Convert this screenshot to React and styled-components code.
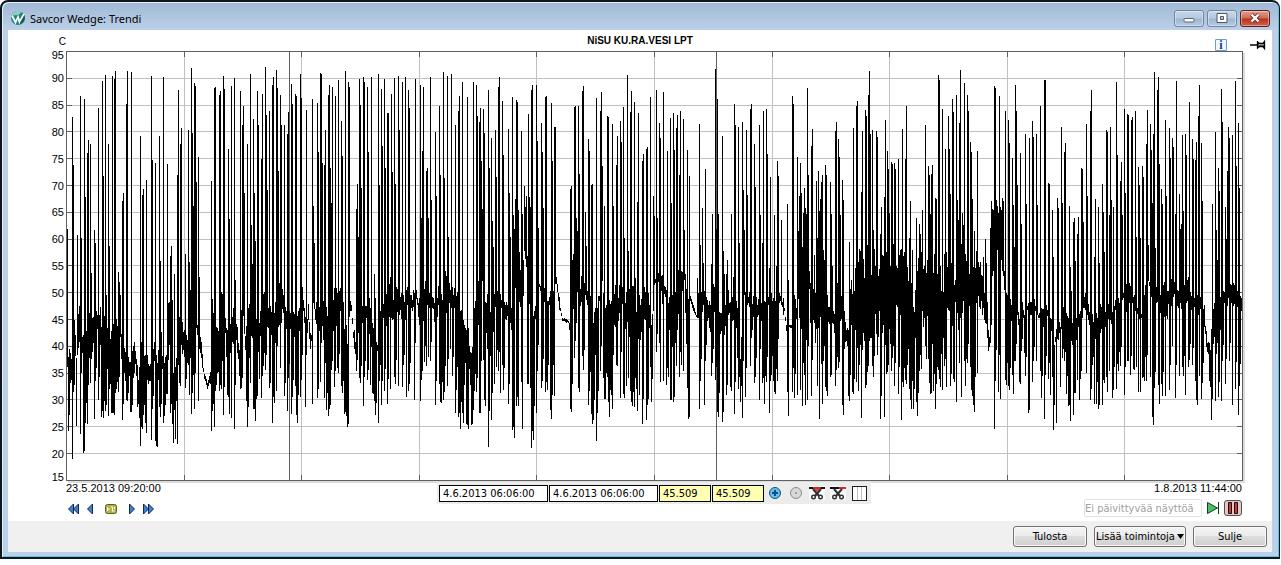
import React from 'react';
import styled, { createGlobalStyle } from 'styled-components';

const PLOT_W = 1177;
const PLOT_H = 430;

// Recorder units, three to a plot column. Each block holds "position,level" pairs:
// peaks and dips are single excursions, band is "position,top,bottom" of the base signal.
const blocks = [
  {
    shift: -6,
    peaks:
      '22,552 37,216 40,360 52,570 61,153 64,580 73,162 82,324 85,285 91,297 94,685 103,555 106,595 115,189 127,108 136,90 139,750 145,297 148,605 157,93 163,102 166,78 175,682 178,711 187,468 190,444 199,177 202,78 214,81 241,273 247,450 250,432 259,405 274,93 277,345 286,354 298,273 301,648 310,98 322,357 325,774 331,633 334,603 343,687 352,390 355,135 361,297 364,249 376,627 385,255 388,652 394,69 397,264 403,114 406,123 415,336 418,697 454,408 463,129 466,126 478,150 481,138 490,93 493,132 505,312 514,123 523,99 526,705 541,138 547,240 550,183 562,297 571,87 574,540 580,222 583,444 592,138 595,240 604,342 607,147 616,66 619,210 628,198 637,120 640,96 649,75 652,129 661,150 664,240 673,240 682,267 685,201 694,117 697,177 706,147 709,153 721,87 724,159 739,195 757,162 760,484 772,174 775,321 781,84 784,87 793,360 796,255 805,150 808,120 814,474 817,126 826,153 835,105 844,228 847,333 856,78 865,111 868,126 889,492 892,417 898,102 901,180 910,96 913,111 922,126 925,321 934,96 943,687 955,87 958,420 964,132 967,303 973,102 982,204 985,204 994,147 1003,99 1006,417 1015,93 1018,255 1027,111 1036,96 1045,135 1048,189 1066,102 1081,120 1084,519 1087,318 1090,126 1099,378 1102,369 1111,96 1114,465 1126,261 1129,453 1138,183 1141,390 1150,81 1153,399 1162,93 1165,576 1174,87 1186,240 1195,198 1198,153',
    dips:
      '25,1160 31,1016 37,1244 40,1043 49,1143 61,1167 64,986 70,1224 73,1220 76,1134 82,1137 85,1022 91,1016 103,1122 106,1010 115,1067 118,996 124,1116 127,1098 130,1119 136,1098 139,1080 145,1113 148,1034 154,1106 157,1104 160,1104 163,1112 169,1000 175,1043 178,996 187,1125 190,1077 199,1067 202,1070 205,1046 211,1101 214,1101 217,1082 220,1000 232,1088 238,1120 241,1203 244,1148 247,1152 250,1110 256,1134 259,1164 265,1019 274,1185 277,1092 286,1190 289,1205 292,1208 298,1088 301,1118 310,1134 313,1115 319,1049 322,1049 331,1106 337,1137 340,1194 343,1097 346,1182 352,1197 358,1016 361,1025 376,1031 388,1052 394,1107 397,1046 403,1092 406,986 415,1070 442,1034 454,1158 457,1100 463,1148 466,1040 475,981 478,1040 481,1022 484,1034 490,1110 502,1052 505,1058 508,1107 514,1120 523,1152 526,1022 541,1034 544,1031 559,1070 562,1148 571,1016 580,1092 583,1092 586,1128 592,1055 598,1002 604,1061 610,965 616,977 628,1031 631,1016 637,1134 640,1058 643,1074 649,1040 661,971 673,1055 676,1016 682,1098 685,1000 694,1107 697,1058 706,1025 709,1110 712,1134 721,1056 724,1006 736,1088 739,930 757,1077 772,1061 775,1034 781,1013 793,1061 796,955 799,1095 805,1113 808,1092 811,1080 814,975 823,1028 832,969 835,985 844,1025 847,1046 853,1107 856,1101 859,1113 862,1148 865,1137 889,980 898,1001 901,1016 910,1085 913,998 922,1007 925,975 931,1022 937,1046 940,1049 943,1070 946,1112 955,1134 958,1010 964,1080 973,1040 982,1077 991,1034 1003,996 1006,1019 1015,1025 1027,1028 1030,960 1039,1058 1045,1040 1048,1019 1063,1067 1066,894 1081,1070 1087,980 1093,953 1099,963 1105,936 1111,948 1126,1082 1138,1019 1141,1073 1144,1076 1150,1067 1153,1043 1162,1025 1171,914 1177,995 1186,1104 1189,1037 1195,1116 1198,1106',
    band:
      '22,930,960 30,935,985 38,960,1000 42,810,930 50,940,970 55,805,890 62,820,910 68,880,930 75,890,950 85,815,930 97,840,900 105,800,920 112,830,860 120,800,880 126,860,1000 140,850,960 150,880,960 160,860,1000 170,800,1000 180,820,880 186,900,970 195,930,1000 205,930,1020 215,950,1000 222,905,950 228,940,975 235,1020,1060 242,920,1110 252,910,1040 262,950,1000 272,960,1010 282,890,950 292,950,1000 302,840,970 312,960,990 320,940,990 328,800,900 336,1020,1060 345,940,1080 352,900,990 360,800,900 367,850,920 375,890,930 385,880,960 393,840,920 402,790,860 410,840,850 416,840,890 424,900,930 430,970,990 436,995,1010 442,1015,1030 450,985,1010 455,800,1000 465,840,960 475,850,970 484,780,960 492,800,830 500,840,920 510,850,910 520,800,870 530,830,880 537,920,980 545,800,1000 550,800,815 556,880,920 564,800,920 575,830,870 585,830,910 597,830,900 606,780,850 616,760,810 625,800,860 637,790,880 650,780,900 660,680,830 668,740,790 675,800,850 685,800,840 697,810,870 710,820,860 722,800,850 727,720,760 733,810,840 739,860,905 745,790,830 751,880,905 755,870,890 760,740,760 766,790,820 775,800,840 785,770,870 795,770,850 805,830,950 815,760,860 825,740,850 835,720,800 845,750,800 854,810,990 862,860,1080 868,740,800 874,780,800 880,860,880 887,890,915 895,810,850 905,800,830 915,790,830 925,760,820 935,810,900 943,880,1020 952,900,920 960,800,850 970,770,820 980,770,830 990,710,780 1000,760,830 1010,740,780 1020,760,800 1030,760,870 1040,740,790 1050,770,790 1060,750,790 1068,730,760 1076,790,820 1084,740,830 1095,730,780 1105,740,790 1115,740,760 1125,810,840 1135,720,780 1145,770,850 1155,710,800 1165,700,750 1175,740,790 1190,750,800 1200,740,800',
  },
  {
    shift: 394,
    peaks:
      '7,111 22,156 40,111 49,120 52,213 58,231 61,189 67,492 70,192 73,264 85,135 88,369 94,279 97,528 106,255 109,396 115,126 118,96 127,168 130,330 145,252 148,444 157,156 160,510 166,462 169,165 172,171 175,495 184,258 187,507 193,423 196,486 199,453 205,207 208,456 211,486 214,135 217,120 229,120 232,288 235,549 244,234 247,321 256,156 259,153 274,174 277,348 283,246 286,246 331,432 334,423 343,186 346,183 349,519 352,560 355,183 367,138 370,123 376,501 379,603 385,282 388,318 394,420 397,417 409,159 421,198 424,141 433,483 442,213 445,216 457,237 460,483 469,360 472,273 481,228 484,291 490,186 493,579 502,90 505,618 511,201 514,138 523,171 526,700 532,471 535,204 547,348 550,327 559,312 562,306 571,156 580,453 583,513 589,135 592,519 598,234 601,279 610,141 622,318 631,219 634,474 640,204 643,315 649,249 652,210 658,390 661,198 670,222 673,555 682,315 688,393 712,700 718,237 721,600 727,489 730,654 736,372 754,657 757,507 766,72 769,552 772,162 775,507 787,273 790,618 799,687 802,645 814,507 820,697 823,177 826,240 835,246 838,594 847,231 850,435 859,255 871,192 874,177 883,297 886,426 898,240 901,510 907,594 910,198 919,192 922,327 928,670 931,396 943,510 949,664 952,348 955,393 964,525 982,477 985,705 997,153 1000,177 1012,336 1015,558 1018,453 1021,354 1024,444 1030,504 1033,429 1036,489 1039,534 1042,129 1045,390 1054,303 1057,252 1063,630 1069,408 1072,579 1075,378 1078,498 1081,462 1084,411 1087,390 1093,645 1096,360 1099,390 1111,411 1114,507 1117,664 1126,258 1129,231 1135,282 1138,336 1147,405 1150,465 1168,591 1180,249 1189,183 1192,168 1195,676',
    dips:
      '1,1152 7,1106 10,1134 13,1022 19,1137 22,1140 25,1152 34,1140 37,1137 40,1095 43,1040 49,1043 52,1001 58,1106 61,1106 64,948 70,945 73,1067 76,1085 85,1206 88,1098 94,1125 97,1046 103,1019 109,966 115,980 121,1046 127,960 130,1037 145,1077 148,1019 157,1155 160,1146 163,1179 169,1083 172,1058 175,1083 184,1013 187,1152 202,1019 205,1019 211,1031 214,1209 217,1160 220,1185 229,1104 232,980 244,1031 247,1010 256,1043 259,1013 262,1037 271,1095 274,1122 277,1052 283,1055 331,1092 334,1101 343,939 346,890 355,1031 358,1043 367,933 370,975 385,1082 388,1040 394,1107 397,1137 400,1125 409,1188 412,1104 421,980 430,1001 433,1064 436,1064 442,996 445,1073 448,1116 454,1052 457,1092 460,930 469,960 472,963 481,1061 484,921 490,1049 493,1061 499,1025 505,1001 511,1040 514,1073 517,1085 523,1088 526,1000 529,1034 532,1098 538,1052 547,1137 550,1064 559,1125 562,1082 565,1064 571,966 574,1073 589,921 592,867 598,894 601,1013 610,1010 619,1022 622,969 625,998 631,1067 634,1067 640,1073 643,1058 649,963 658,998 664,962 670,978 682,1031 685,1122 688,1116 718,1092 721,1010 733,1080 736,950 754,993 757,955 766,1007 772,1101 775,1116 787,1131 790,1101 799,1052 802,1022 811,1028 814,1040 823,1107 826,1013 832,939 835,1034 838,998 841,1073 844,1025 847,1119 850,948 856,1058 871,963 874,880 883,1016 886,996 898,1067 901,912 907,1016 910,1001 913,1077 919,1013 922,936 928,1106 934,990 940,1010 943,1043 946,1049 952,1010 955,882 982,1043 985,1115 997,1043 1003,1059 1012,1052 1021,1037 1027,1083 1030,954 1033,990 1036,1082 1042,1067 1045,903 1054,1055 1057,945 1072,1025 1078,1122 1084,950 1087,1077 1096,1028 1099,1040 1102,1055 1111,996 1114,990 1126,1025 1129,975 1135,969 1138,953 1147,1080 1150,1110 1153,912 1165,1055 1168,1070 1177,1043 1180,1049 1189,1011 1195,1040',
    band:
      '0,820,850 8,800,900 16,850,930 24,860,960 32,920,1020 40,930,960 44,780,850 52,740,850 62,650,820 68,620,720 76,740,890 86,780,910 95,770,890 103,750,790 112,750,790 122,770,790 130,770,800 138,790,810 146,780,810 154,780,850 160,580,820 170,620,770 178,650,740 186,700,850 193,600,620 198,640,670 205,640,730 214,640,830 220,830,860 226,790,810 233,700,710 240,725,740 248,740,765 256,745,780 264,770,780 272,745,780 280,740,760 287,680,700 294,740,760 300,790,800 308,820,828 316,823,832 324,828,834 330,840,880 336,680,820 344,670,720 352,650,720 360,740,770 366,690,780 376,740,750 385,740,800 395,790,880 404,830,920 412,780,910 418,755,770 426,700,710 432,790,830 440,780,800 448,780,830 456,790,820 464,750,820 472,740,820 480,750,800 488,740,780 496,770,830 505,740,850 515,770,940 525,770,1000 535,760,880 545,750,850 555,750,840 565,770,830 575,860,900 584,710,720 592,690,705 600,680,720 608,700,760 615,730,760 622,780,850 630,780,860 640,770,890 650,750,860 658,690,740 665,680,740 674,670,710 680,700,900 688,880,910 692,755,770 700,780,800 708,810,818 714,815,820 720,750,780 728,770,800 734,740,750 742,770,810 750,790,850 760,730,800 768,740,850 776,820,860 784,810,870 793,800,850 802,740,820 812,780,820 822,760,820 832,780,840 840,960,1020 848,770,920 854,740,750 862,745,770 870,770,790 880,770,820 890,770,800 900,790,820 910,770,790 920,780,800 928,745,770 938,760,780 946,780,830 956,740,770 964,750,780 972,790,800 980,840,860 988,840,848 996,840,852 1000,760,790 1008,790,810 1016,600,760 1024,660,900 1032,600,880 1040,540,860 1044,640,645 1052,720,820 1062,720,840 1072,700,900 1080,580,880 1090,650,900 1098,730,800 1106,800,820 1114,790,830 1122,820,850 1130,740,830 1138,740,810 1146,790,850 1154,800,830 1160,850,870 1166,850,910 1172,740,820 1180,730,860 1190,700,880 1198,680,920',
  },
  {
    shift: 794,
    peaks:
      '4,441 7,258 16,195 19,213 25,150 28,78 37,255 40,555 49,258 52,276 61,567 64,486 73,456 76,225 82,318 85,372 94,351 97,357 103,354 106,372 115,342 127,252 136,342 139,183 148,579 151,468 157,615 169,519 178,537 187,495 196,240 205,363 208,390 214,387 217,360 226,459 229,462 235,90 238,105 247,192 256,312 259,621 265,213 268,312 277,162 280,201 289,150 292,465 298,234 301,75 307,504 310,540 313,114 322,150 325,198 331,291 334,321 343,558 352,318 370,636 376,582 391,549 394,468 397,492 400,500 403,123 406,129 409,465 412,483 418,153 421,486 424,495 427,459 430,468 436,198 445,225 448,294 457,339 460,480 466,120 469,198 481,324 484,537 496,267 508,279 517,228 520,276 529,267 532,480 541,183 553,105 556,105 565,414 568,417 577,495 592,459 595,489 604,246 613,321 616,294 628,483 631,666 640,531 643,519 652,567 655,516 664,369 667,372 679,237 691,198 694,135 703,636 706,462 715,486 718,654 727,417 730,501 739,255 742,261 748,510 751,246 760,486 769,111 772,330 781,408 784,351 793,192 796,444 802,207 805,210 814,225 817,216 826,198 829,576 835,366 838,420 847,363 850,396 859,297 862,195 865,600 871,237 874,315 880,267 883,81 886,609 892,135 895,96 904,432 907,477 916,225 919,453 928,249 931,339 937,279 940,306 946,507 949,108 958,447 961,552 964,537 967,270 970,498 976,267 979,330 988,171 997,282 1000,342 1006,345 1009,291 1015,213 1018,120 1024,294 1027,468 1057,477 1066,261 1069,555 1075,369 1078,438 1084,132 1087,231 1096,486 1102,378 1105,246 1108,279 1117,270 1126,108 1135,234 1138,429',
    dips:
      '4,1119 7,917 16,1031 19,1022 25,963 31,880 37,963 40,996 52,930 61,1122 64,1055 73,1116 79,987 85,960 94,980 97,939 103,1025 115,1049 124,1125 127,1013 130,1028 136,1007 139,1019 148,1034 151,1067 154,1092 160,1092 169,1073 172,1113 178,980 184,972 196,904 199,942 205,944 208,1016 211,1049 214,1046 220,1040 226,1092 229,1019 235,975 238,1004 241,1028 247,1037 253,965 259,1028 271,1025 280,1004 283,1013 289,1073 298,954 304,1058 313,950 316,1025 322,954 331,966 334,1037 337,1055 340,1080 343,1101 346,990 352,986 403,1152 406,1010 415,1043 421,1064 436,1007 439,1022 445,1025 448,1037 457,990 460,1049 463,950 466,948 478,1013 481,1019 484,920 493,926 496,995 505,1104 508,1095 517,1013 520,948 529,950 541,978 544,1061 553,1122 556,990 565,1004 571,1052 577,998 580,1155 589,1134 601,1028 607,940 613,950 619,1049 625,1085 628,1082 631,1128 640,1110 646,1046 652,1007 658,1067 664,980 679,986 691,1067 694,1034 697,960 703,1077 709,1077 715,1092 718,1080 727,1082 733,1016 739,998 742,1043 748,980 757,1061 760,1037 769,1034 775,978 781,965 793,1052 802,950 805,948 811,990 820,972 823,975 829,966 835,1043 841,1043 847,1000 850,998 853,1010 859,1010 871,998 877,1116 880,1140 886,983 895,1022 898,1077 904,1019 907,1055 916,1055 928,1037 937,903 946,1059 949,960 958,993 967,968 970,993 976,1052 985,966 988,945 997,960 1006,1010 1009,1067 1012,1082 1018,995 1024,1064 1027,1016 1048,1010 1051,1010 1054,1125 1066,1070 1075,1058 1084,1070 1087,950 1096,1019 1108,948 1117,1082 1126,1034 1135,1110 1138,1025',
    band:
      '0,670,880 10,680,860 20,680,880 30,620,870 40,650,810 50,640,820 60,670,830 70,680,870 80,660,900 90,690,870 100,650,870 110,640,780 120,630,780 130,660,820 140,690,880 150,700,850 157,760,820 163,800,920 170,710,860 180,660,860 190,660,830 200,660,800 212,680,820 225,650,900 240,670,930 252,680,850 262,670,810 275,700,860 285,700,780 295,660,820 305,620,770 315,640,740 325,650,750 335,690,900 345,670,930 352,680,760 360,680,770 368,710,790 376,740,810 382,800,880 387,880,905 390,890,895 393,560,780 400,510,640 410,490,650 418,580,650 424,600,640 432,680,720 438,740,790 448,770,810 456,790,810 464,800,850 470,740,760 478,830,850 486,770,790 494,810,830 500,790,800 508,770,790 518,775,795 526,785,800 534,810,820 542,800,820 550,810,840 558,780,800 566,810,830 576,830,870 584,900,905 592,830,870 600,840,870 610,800,840 620,820,840 630,850,900 640,860,890 650,840,870 660,810,840 670,770,790 680,760,800 690,820,850 700,830,880 710,820,860 720,800,850 730,810,840 740,800,830 750,790,830 760,800,830 770,770,790 780,770,780 790,745,760 800,730,780 810,735,780 820,750,780 830,780,800 840,820,830 850,780,800 858,690,760 866,700,710 875,730,750 885,740,760 895,740,780 905,770,820 915,700,800 925,740,780 935,700,760 945,720,760 955,740,780 965,740,780 975,730,780 985,700,760 995,760,790 1005,760,800 1015,770,800 1024,780,800 1032,800,830 1040,880,910 1046,910,930 1052,900,1000 1058,800,900 1068,790,900 1078,790,890 1090,760,790 1100,740,770 1110,720,770 1120,730,770 1130,740,770 1140,750,790 1146,780,820',
  },
];

const parse = (text) => text.split(' ').map((item) => item.split(',').map(Number));
const toCol = (value, shift) => Math.floor(value / 3) + shift;
const toRow = (value) => Math.floor(value / 3) - 6;

const buildTrace = () => {
  const band = [];
  const tops = {};
  const bottoms = {};
  blocks.forEach(({ shift, peaks, dips, band: base }) => {
    parse(base).forEach(([x, top, bottom]) => band.push([toCol(x, shift), toRow(top), toRow(bottom)]));
    parse(peaks).forEach(([x, y]) => {
      tops[toCol(x, shift)] = toRow(y);
    });
    parse(dips).forEach(([x, y]) => {
      bottoms[toCol(x, shift)] = toRow(y);
    });
  });

  let path = '';
  let seed = 17;
  const noise = () => {
    seed = (seed * 1103515245 + 12345) % 2147483648;
    return seed / 2147483648 - 0.5;
  };
  let k = 0;
  for (let col = 1; col < PLOT_W - 1; col++) {
    while (k < band.length - 2 && band[k + 1][0] <= col) k++;
    const [x0, t0, b0] = band[k];
    const [x1, t1, b1] = band[k + 1];
    const f = Math.max(0, Math.min(1, (col - x0) / (x1 - x0 || 1)));
    const size = b0 - t0;
    const spread = size > 12 ? size * 0.6 : size > 6 ? 10 : 1;
    const grow = size > 6 ? 2 : 0;
    let top = Math.round(t0 + (t1 - t0) * f + noise() * spread) - grow;
    let bottom = Math.round(b0 + (b1 - b0) * f + noise() * spread) + grow;
    if (bottom < top + 2) bottom = top + 2;
    // an excursion often leaves a shorter shoulder in the next column
    const rise = noise();
    const fall = noise();
    if (tops[col] !== undefined) top = Math.min(top, tops[col]);
    else if (tops[col - 1] < top && rise > 0.3) top = Math.round(top - (top - tops[col - 1]) * 0.6);
    if (bottoms[col] !== undefined) bottom = Math.max(bottom, bottoms[col]);
    else if (bottoms[col - 1] > bottom && fall > 0) bottom = Math.round(bottom + (bottoms[col - 1] - bottom) * 0.7);
    path += `M${col} ${top}h1V${bottom}h-1z`;
  }
  return path;
};

const trace = buildTrace();
const gridCols = [118, 235, 353, 470, 588, 706, 823, 941, 1058];
const gridRows = Array.from({ length: 15 }, (_, i) => Math.round((i + 1) * 26.8));
const cursorCols = [223, 650];
const levels = Array.from({ length: 17 }, (_, i) => 95 - i * 5);

const TrendPlot = () => (
  <Plot viewBox={`0 0 ${PLOT_W} ${PLOT_H}`} preserveAspectRatio="none" role="img" aria-label="NiSU KU.RA.VESI LPT">
    <g fill="#c0c0c0">
      {gridRows.map((y) => (
        <rect key={y} x="0" y={y} width={PLOT_W} height="1" />
      ))}
      {gridCols.map((x) => (
        <rect key={x} x={x} y="0" width="1" height={PLOT_H} />
      ))}
    </g>
    <g fill="#606060">
      {gridCols.map((x) => (
        <path key={x} d={`M${x} 0h1v6h-1zM${x} 424h1v6h-1z`} />
      ))}
      {gridRows.map((y) => (
        <path key={y} d={`M0 ${y}h6v1h-6zM1171 ${y}h6v1h-6z`} />
      ))}
      {cursorCols.map((x) => (
        <rect key={x} x={x} y="0" width="1" height={PLOT_H} />
      ))}
    </g>
    <path d={trace} fill="#000" />
    <path d="M0 0H1177V430H0zM1 1V429H1176V1z" fill="#606060" fillRule="evenodd" />
  </Plot>
);

const AppLogo = () => (
  <svg width="16" height="16" viewBox="0 0 16 16">
    <circle cx="8" cy="8" r="7" fill="#2b8177" />
    <path d="M1.500 5.500A7 7 0 0 1 12 2L8 5z" fill="#8fcfc2" />
    <path d="M2 5.500l3.500 7L8 7l1.500 5L14 4" fill="none" stroke="#f4fffc" strokeWidth="1.800" />
    <path d="M10 14c4-1 5.500-5 4.500-9l-4 7z" fill="#155b54" />
  </svg>
);

const PinIcon = () => (
  <svg width="16" height="12" viewBox="0 0 16 12">
    <path d="M0 6h7" stroke="#000" strokeWidth="1.500" />
    <path d="M7.500 2v8M8 3.500l2 1h3l1.500-2v7l-1.500-2h-3l-2 1z" fill="#c4c4c4" stroke="#000" strokeWidth="1.300" />
    <path d="M9 6.500h5V8H9z" fill="#000" />
  </svg>
);

const Arrow = ({ double, flip }) => (
  <svg width="12" height="12" viewBox="0 0 12 12">
    <g transform={flip ? 'matrix(-1 0 0 1 12 0)' : undefined} fill="#3f80c8" stroke="#10285c">
      {double ? <path d="M5.500 1v10l-5-5zM10.500 1v10l-5-5z" /> : <path d="M8.500 1v10l-5-5z" />}
    </g>
  </svg>
);

const HomeIcon = () => (
  <svg width="12" height="10" viewBox="0 0 12 10">
    <rect x=".5" y=".5" width="11" height="9" rx="2" fill="#b5b14c" stroke="#5d5c14" />
    <path d="M2.500 3v4M2 5h3M6 3h1.500v4M7 7h2.500M9.500 3v2" stroke="#fffff0" fill="none" />
  </svg>
);

const CircleIcon = ({ active }) => (
  <svg width="14" height="14" viewBox="0 0 14 14">
    <circle cx="7" cy="7" r="5.500" fill={active ? '#62c0ec' : '#d8d8d8'} stroke={active ? '#1d4b74' : '#8c8c8c'} />
    {active ? <path d="M4 7h6M7 4v6" stroke="#0b4f8a" strokeWidth="2" /> : <circle cx="7" cy="7" r="1" fill="#8c8c8c" />}
  </svg>
);

const ScissorsIcon = ({ outside }) => (
  <svg width="16" height="14" viewBox="0 0 16 14">
    <rect width="16" height="14" fill="#fafafa" />
    <path d="M0 2h16" stroke="#101010" strokeWidth="2" />
    <path d={outside ? 'M9 2h7' : 'M4 2h8'} stroke="#d82828" strokeWidth="2" />
    {!outside && <path d="M5 3h6L8 6z" fill="#e04848" />}
    <path d="M4 3l6 7M12 3l-6 7" stroke="#303030" strokeWidth="2" />
    <circle cx="4.500" cy="11" r="1.800" fill="none" stroke="#303030" strokeWidth="1.400" />
    <circle cx="11.500" cy="11" r="1.800" fill="none" stroke="#303030" strokeWidth="1.400" />
  </svg>
);

const ColumnsIcon = () => (
  <svg width="15" height="15" viewBox="0 0 15 15">
    <rect x=".5" y=".5" width="14" height="14" fill="#fff" stroke="#202020" />
    <path d="M5.500 1v13M9.500 1v13" stroke="#c8b8c8" />
  </svg>
);

const App = () => {
  return (
    <>
      <GlobalStyle />
      <Window>
        <TitleBar>
          <AppLogo />
          <Caption>Savcor Wedge: Trendi</Caption>
          <WindowButton aria-label="Minimize">
            <svg width="12" height="10" viewBox="0 0 12 10">
              <rect x="1" y="5.500" width="10" height="3.500" rx="1" fill="#fff" stroke="#5c6878" />
            </svg>
          </WindowButton>
          <WindowButton aria-label="Maximize">
            <svg width="12" height="10" viewBox="0 0 12 10">
              <path d="M1 .5h10v9H1zM4.500 3.500v3h3v-3z" fill="#fff" fillRule="evenodd" stroke="#4c5868" />
            </svg>
          </WindowButton>
          <WindowButton $close aria-label="Close">
            <svg width="12" height="10" viewBox="0 0 12 10">
              <path d="M2.500 1.500l7 7M9.500 1.500l-7 7" stroke="#6b2a24" strokeWidth="4" />
              <path d="M2.500 1.500l7 7M9.500 1.500l-7 7" stroke="#fff" strokeWidth="2.400" />
            </svg>
          </WindowButton>
        </TitleBar>
        <Content>
          <ChartHeader>
            <Unit>C</Unit>
            <ChartTitle>NiSU KU.RA.VESI LPT</ChartTitle>
            <HeaderTools>
              <InfoButton aria-label="Info">i</InfoButton>
              <IconButton aria-label="Pin">
                <PinIcon />
              </IconButton>
            </HeaderTools>
          </ChartHeader>
          <ChartBody>
            <Axis>
              {levels.map((level) => (
                <AxisLabel key={level}>{level}</AxisLabel>
              ))}
            </Axis>
            <TrendPlot />
          </ChartBody>
          <ChartFooter>
            <Side>
              <Time>23.5.2013 09:20:00</Time>
              <Navigation>
                <IconButton aria-label="First">
                  <Arrow double />
                </IconButton>
                <IconButton aria-label="Previous">
                  <Arrow />
                </IconButton>
                <HomeButton aria-label="Default range">
                  <HomeIcon />
                </HomeButton>
                <IconButton aria-label="Next">
                  <Arrow flip />
                </IconButton>
                <IconButton aria-label="Last">
                  <Arrow double flip />
                </IconButton>
              </Navigation>
            </Side>
            <CursorBar>
              <Field aria-label="Cursor 1 time" defaultValue="4.6.2013 06:06:00" />
              <Field aria-label="Cursor 2 time" defaultValue="4.6.2013 06:06:00" />
              <Field $value aria-label="Cursor 1 value" defaultValue="45.509" />
              <Field $value aria-label="Cursor 2 value" defaultValue="45.509" />
              <CursorTools>
                <ToolButton aria-label="Zoom in">
                  <CircleIcon active />
                </ToolButton>
                <ToolButton aria-label="Zoom out">
                  <CircleIcon />
                </ToolButton>
                <ToolButton aria-label="Cut between">
                  <ScissorsIcon />
                </ToolButton>
                <ToolButton aria-label="Cut outside">
                  <ScissorsIcon outside />
                </ToolButton>
                <ToolButton aria-label="Columns">
                  <ColumnsIcon />
                </ToolButton>
              </CursorTools>
            </CursorBar>
            <Side $end>
              <Time>1.8.2013 11:44:00</Time>
              <Playback>
                <Status aria-label="Update state" readOnly value="Ei päivittyvää näyttöä" />
                <IconButton aria-label="Play">
                  <svg width="14" height="14" viewBox="0 0 14 14">
                    <path d="M1.500 1.500v11l10-5.500z" fill="#43c46a" stroke="#123c1e" />
                    <path d="M12.500 1v12" stroke="#123c1e" />
                  </svg>
                </IconButton>
                <PauseButton aria-label="Pause">
                  <svg width="12" height="12" viewBox="0 0 12 12">
                    <path d="M1.500 .5h3v11h-3zM7.500 .5h3v11h-3z" fill="#c43c3c" stroke="#200808" />
                  </svg>
                </PauseButton>
              </Playback>
            </Side>
          </ChartFooter>
          <ActionBar>
            <ActionButton>Tulosta</ActionButton>
            <ActionButton $wide>
              Lisää toimintoja
              <svg width="7" height="5" viewBox="0 0 7 5">
                <path d="M0 0h7L3.500 5z" />
              </svg>
            </ActionButton>
            <ActionButton>Sulje</ActionButton>
          </ActionBar>
        </Content>
      </Window>
    </>
  );
};

export default App;

const GlobalStyle = createGlobalStyle`
  * {
    box-sizing: border-box;
  }
  body {
    margin: 0;
    background: #fff;
    font-family: 'DejaVu Sans Condensed', 'DejaVu Sans', sans-serif;
    font-size: 11px;
    color: #000;
  }
  button, input {
    font: inherit;
    margin: 0;
    padding: 0;
  }
  svg {
    display: block;
    flex-shrink: 0;
  }
`;

const Window = styled.div`
  margin-right: 1px;
  padding: 0 7px 5px 6px;
  border: 2px solid #10161e;
  border-right-width: 1px;
  border-radius: 8px 8px 0 0;
  background: linear-gradient(#9fb8d6, #bcd0e8 28px, #b9d1ea);
  box-shadow: inset 1px 1px 0 #e4eef8, inset -1px -1px 0 #5fc4dc;
`;

const TitleBar = styled.header`
  display: flex;
  align-items: center;
  gap: 3px;
  height: 28px;
  padding: 4px 2px 0;
`;

const Caption = styled.h1`
  flex: 1;
  margin: 0 0 0 1px;
  font: 11px 'Noto Sans', sans-serif;
`;

const WindowButton = styled.button`
  display: flex;
  align-items: center;
  justify-content: center;
  width: 30px;
  height: 17px;
  border: 1px solid ${({ $close }) => ($close ? '#5c1f1c' : '#71859f')};
  border-radius: 3px;
  background: ${({ $close }) =>
    $close ? 'linear-gradient(#e0a090, #cf6a55 48%, #b8331c 52%, #d0604a)' : 'linear-gradient(#c6d6e8, #b6c9e0 48%, #9fb6d2 52%, #b4cae4)'};
  box-shadow: inset 0 0 0 1px rgba(255, 255, 255, 0.4);
`;

const Content = styled.main`
  background: #fff;
`;

const ChartHeader = styled.div`
  display: grid;
  grid-template-columns: 58px 1fr 58px;
  height: 21px;
`;

const Unit = styled.span`
  text-align: right;
  font: 10px/24px 'Liberation Sans', sans-serif;
`;

const ChartTitle = styled.h2`
  margin: 0;
  text-align: center;
  font: bold 10px/22px 'Liberation Sans', sans-serif;
`;

const HeaderTools = styled.div`
  display: flex;
  align-items: center;
  justify-content: flex-end;
  gap: 23px;
  padding: 6px 6px 0 0;
`;

const IconButton = styled.button`
  display: flex;
  border: 0;
  background: none;
`;

const InfoButton = styled.button`
  flex-shrink: 0;
  width: 12px;
  height: 12px;
  border: 1px solid #6a9cc8;
  border-radius: 1px;
  background: #f2f8ff;
  color: #143c8c;
  font: bold 12px/10px 'Liberation Serif', serif;
`;

const ChartBody = styled.div`
  display: flex;
  padding-right: 29px;
`;

const Axis = styled.div`
  display: flex;
  flex-direction: column;
  width: 58px;
  height: 430px;
  padding-right: 2px;
  text-align: right;
  font: 11px/8px 'Liberation Sans', sans-serif;
`;

const AxisLabel = styled.div`
  display: flex;
  align-items: center;
  justify-content: flex-end;
  flex: 1;
  &:first-child {
    flex: 0 0 14px;
    align-items: flex-start;
  }
  &:last-child {
    flex: 0 0 14px;
    align-items: flex-end;
  }
`;

const Plot = styled.svg`
  flex: 1;
  min-width: 0;
  height: 430px;
  shape-rendering: crispEdges;
  box-shadow: 2px 2px 0 #dcdcdc;
`;

const ChartFooter = styled.div`
  display: flex;
  justify-content: space-between;
  height: 40px;
  padding: 1px 30px 0 58px;
`;

const Side = styled.div`
  display: flex;
  flex-direction: column;
  flex: 1;
  align-items: ${({ $end }) => ($end ? 'flex-end' : 'flex-start')};
`;

const Time = styled.time`
  font: 11px/12px 'Liberation Sans', sans-serif;
`;

const Navigation = styled.nav`
  display: flex;
  align-items: center;
  gap: 4px;
  margin-top: 9px;
  padding-left: 2px;
`;

const HomeButton = styled(IconButton)`
  margin: 0 5px;
`;

const CursorBar = styled.div`
  display: flex;
  align-items: center;
  gap: 1px;
  height: 22px;
  padding: 0 4px 0 2px;
  background: #ececec;
`;

const Field = styled.input`
  width: ${({ $value }) => ($value ? '52px' : '109px')};
  height: 17px;
  padding: 0 3px;
  border: 1px solid #000;
  border-radius: 0;
  background: ${({ $value }) => ($value ? '#ffffb4' : '#fff')};
`;

const CursorTools = styled.div`
  display: flex;
  align-items: center;
  gap: 5px;
  padding-left: 2px;
`;

const ToolButton = styled(IconButton)`
  justify-content: center;
  width: 16px;
`;

const Playback = styled.div`
  display: flex;
  align-items: center;
  gap: 4px;
  margin-top: 5px;
`;

const Status = styled.input`
  width: 118px;
  height: 18px;
  border: 1px solid #e2e2e2;
  border-radius: 2px;
  background: #fff;
  color: #a0a0a0;
`;

const PauseButton = styled.button`
  display: flex;
  align-items: center;
  justify-content: center;
  width: 18px;
  height: 16px;
  border: 1px solid #505050;
  border-radius: 3px;
  background: #e4c8c8;
`;

const ActionBar = styled.footer`
  display: flex;
  justify-content: flex-end;
  gap: 7px;
  height: 31px;
  padding: 5px 5px 5px 0;
  background: #f0f0f0;
`;

const ActionButton = styled.button`
  display: flex;
  align-items: center;
  justify-content: center;
  gap: 2px;
  width: ${({ $wide }) => ($wide ? '92px' : '74px')};
  border: 1px solid #707070;
  border-radius: 3px;
  background: linear-gradient(#f4f4f4, #ebebeb 50%, #dddddd 50%, #cfcfcf);
  box-shadow: inset 0 0 0 1px #fafafa;
  white-space: nowrap;
`;
